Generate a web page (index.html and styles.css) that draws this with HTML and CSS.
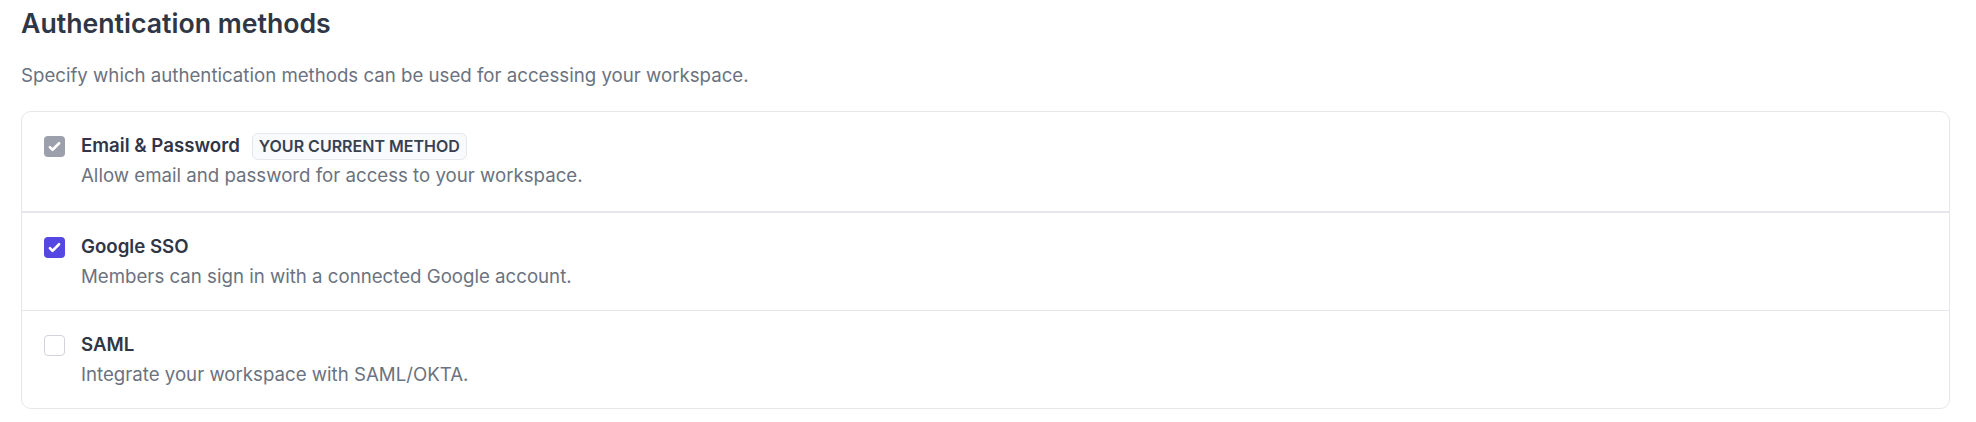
FILE: index.html
```html
<!DOCTYPE html>
<html lang="en">
<head>
    <meta charset="UTF-8">
    <title>Authentication methods</title>
    <link rel="stylesheet" href="styles.css">
</head>
<body>
    <div class="page">
        <h2 class="title">Authentication methods</h2>
        <p class="intro">Specify which authentication methods can be used for accessing your workspace.</p>

        <ul class="methods">
            <li class="method method-first">
                <span class="box box-locked">
                    <svg viewBox="0 0 16 16"><path d="M12.207 4.793a1 1 0 010 1.414l-5 5a1 1 0 01-1.414 0l-2-2a1 1 0 011.414-1.414L6.5 9.086l4.293-4.293a1 1 0 011.414 0z" fill="#fff"/></svg>
                </span>
                <div class="method-body">
                    <div class="method-head">
                        <span class="method-name">Email &amp; Password</span>
                        <span class="badge">Your current method</span>
                    </div>
                    <p class="method-desc">Allow email and password for access to your workspace.</p>
                </div>
            </li>
            <li class="method">
                <span class="box box-on">
                    <svg viewBox="0 0 16 16"><path d="M12.207 4.793a1 1 0 010 1.414l-5 5a1 1 0 01-1.414 0l-2-2a1 1 0 011.414-1.414L6.5 9.086l4.293-4.293a1 1 0 011.414 0z" fill="#fff"/></svg>
                </span>
                <div class="method-body">
                    <div class="method-head">
                        <span class="method-name">Google SSO</span>
                    </div>
                    <p class="method-desc">Members can sign in with a connected Google account.</p>
                </div>
            </li>
            <li class="method">
                <span class="box"></span>
                <div class="method-body">
                    <div class="method-head">
                        <span class="method-name">SAML</span>
                    </div>
                    <p class="method-desc">Integrate your workspace with SAML/OKTA.</p>
                </div>
            </li>
        </ul>
    </div>
</body>
</html>
```

FILE: styles.css
```css
body {
    margin: 0;
    background-color: #fff;
    font-family: "Inter", "Noto Sans", sans-serif;
    color: #374151;
}
.page {
    padding: 5px 26px 0 21px;
}
.title {
    margin: 0;
    font-size: 26.67px;
    line-height: 37.33px;
    font-weight: 600;
    color: #303645;
}
.intro {
    margin: 21px 0 0;
    font-size: 18.67px;
    line-height: 26.67px;
    color: #6b7280;
}
.methods {
    margin: 21px 0 0;
    padding: 0;
    list-style: none;
    border: 1px solid #e5e7eb;
    border-radius: 10px;
}
.method {
    display: flex;
    align-items: flex-start;
    gap: 16px;
    padding: 21px 21px 21px 22px;
    border-top: 1px solid #e5e7eb;
}
.method-first {
    padding-bottom: 22px;
    border-top: 0;
    border-bottom: 2px solid #e6e7ec;
}
.method-first + .method {
    padding-bottom: 20px;
    border-top: 0;
}
.method:last-child {
    padding-bottom: 20px;
}
.box {
    flex: none;
    box-sizing: border-box;
    width: 21px;
    height: 21px;
    margin-top: 3px;
    display: flex;
    border: 1px solid #d1d5db;
    border-radius: 4px;
    background-color: #fff;
}
.box svg {
    width: 100%;
    height: 100%;
}
.box-locked,
.box-on {
    border: 0;
}
.box-locked {
    background-color: #9ca0ad;
}
.box-on {
    background-color: #5548e2;
}
.method-head {
    display: flex;
    align-items: center;
    gap: 12px;
}
.method-name {
    font-size: 18.67px;
    line-height: 26.67px;
    font-weight: 600;
    color: #303645;
}
.badge {
    padding: 2px 6px;
    font-size: 16px;
    line-height: 21px;
    font-weight: 600;
    text-transform: uppercase;
    color: #374151;
    background-color: #f9fafb;
    border: 1px solid #e5e7eb;
    border-radius: 6px;
}
.method-desc {
    margin: 2.67px 0 0;
    font-size: 18.67px;
    line-height: 26.67px;
    color: #6b7280;
}
```
